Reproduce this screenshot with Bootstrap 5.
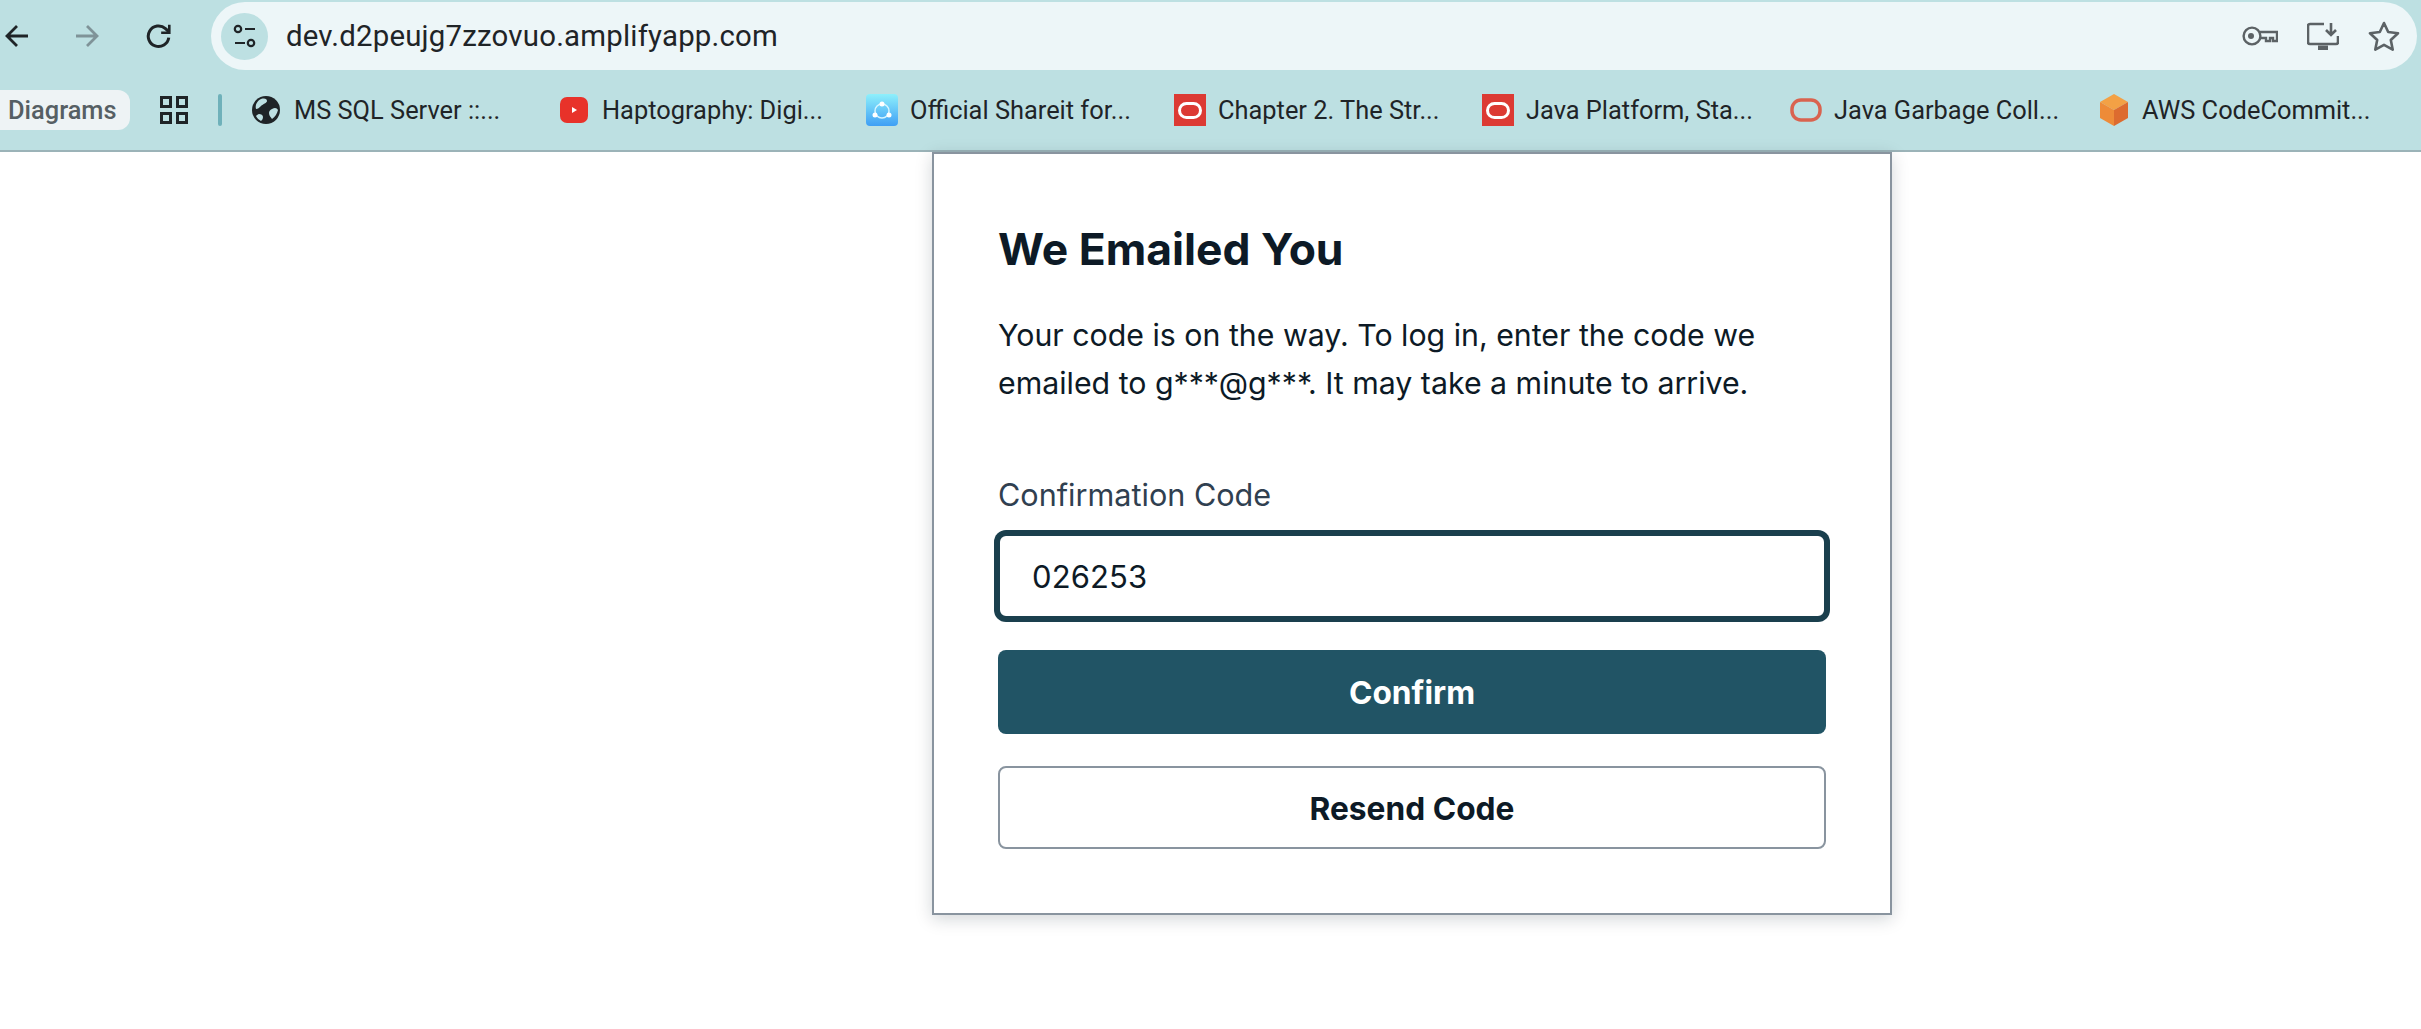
<!DOCTYPE html>
<html lang="en">
<head>
<meta charset="utf-8">
<title>We Emailed You</title>
<link href="https://cdn.jsdelivr.net/npm/bootstrap@5.3.0/dist/css/bootstrap.min.css" rel="stylesheet">
<style>
html{background:#fff;overflow:hidden}
body{background:#fff;min-height:1029px;font-family:Inter,"Liberation Sans",sans-serif;color:#0d1a26}
.chrome-bar{background:#bde0e2;height:152px;border-bottom:2px solid #9bb3b8;font-family:Roboto,"Liberation Sans",sans-serif;color:#1f2427}
.tool-row{height:68px;margin-top:2px}
.nav-slot{width:24px;height:24px;display:block}
.nav-first{margin-left:5px}
.nav-second{margin-left:46px}
.nav-third{margin-left:47px;width:26px;height:26px}
.omni{margin-left:39px;margin-right:4px;background:#edf6f8;border-radius:34px;padding-left:10px;padding-right:17px}
.omni-badge{width:47px;height:47px;background:#bde0e2;border-radius:50%}
.omni-url{font-size:29.4px;margin-left:18px;letter-spacing:.2px}
.omni-tools{gap:29px}
.mark-row{height:80px}
.pill-tab{width:130px;height:40px;background:#eef3f5;border-radius:0 12px 12px 0;font-size:25.4px;font-weight:500;color:#565f64;padding-left:8px}
.grid-ico{margin-left:30px}
.mark-sep{width:4px;height:32px;background:#6fb1ba;border-radius:2px;margin-left:30px;margin-right:28px}
.mark-item{flex:0 0 308px;font-size:25.4px;gap:12px}
.mark-ico{width:32px;height:32px;flex:none;display:block}
.sign-box{width:960px;margin-left:932px;border:2px solid #89949f;background:#fff;box-shadow:0 4px 16px rgba(13,26,38,.18);padding:64px}
.sign-title{font-size:44.4px;font-weight:700;line-height:63px;color:#0d1a26;margin-bottom:30px}
.sign-copy{font-size:30.3px;line-height:48px;color:#0d1a26;margin-bottom:64px}
.code-label{font-size:30.6px;line-height:48px;color:#304050;margin-bottom:15px;display:block}
.code-input{height:84px;border:2px solid #1a3f4d;box-shadow:0 0 0 4px #1a3f4d;border-radius:8px;padding:0 32px;font-size:31px;color:#0d1a26;margin-bottom:32px;letter-spacing:.1px}
.code-input:focus{border-color:#1a3f4d;box-shadow:0 0 0 4px #1a3f4d;color:#0d1a26}
.act-main,.act-main:hover{height:84px;padding-top:8px;background:#215465;border:0;border-radius:8px;color:#fff;font-size:31.7px;font-weight:700;margin-bottom:32px}
.act-alt,.act-alt:hover{height:83px;padding-top:8px;background:#fff;border:2px solid #89949f;border-radius:8px;color:#0d1a26;font-size:31.7px;font-weight:700}
</style>
</head>
<body>
<header class="chrome-bar d-flex flex-column">
  <div class="tool-row d-flex align-items-center">
    <svg class="nav-slot nav-first" viewBox="0 0 24 24" fill="none" stroke="#1f2427" stroke-width="2.8"><path d="M23 12H2M12 2 2 12l10 10"/></svg>
    <svg class="nav-slot nav-second" viewBox="0 0 24 24" fill="none" stroke="#7f9398" stroke-width="2.8"><path d="M1 12h21M12 2l10 10-10 10"/></svg>
    <svg class="nav-slot nav-third" viewBox="0 0 24 24" fill="none" stroke="#1f2427" stroke-width="2.8"><path d="M21 13.500A9.500 9.500 0 1 1 18 5.200L21 8"/><path d="M21.500 1.500V9h-7.500" stroke-width="2.400"/></svg>
    <div class="omni flex-grow-1 h-100 d-flex align-items-center">
      <div class="omni-badge d-flex align-items-center justify-content-center flex-none">
        <svg width="24" height="26" viewBox="0 0 24 26" fill="none" stroke="#1f2427" stroke-width="2.200"><circle cx="5" cy="6" r="3.200"/><path d="M12 6h10M2 20h10"/><circle cx="18" cy="20" r="3.200"/></svg>
      </div>
      <span class="omni-url flex-grow-1">dev.d2peujg7zzovuo.amplifyapp.com</span>
      <div class="omni-tools d-flex align-items-center">
        <svg width="36" height="20" viewBox="0 0 36 20" fill="none" stroke="#5c6265" stroke-width="2.400"><circle cx="10" cy="10" r="8.400"/><circle cx="9" cy="10" r="3" fill="#5c6265" stroke="none"/><path d="M18 6h17v9h-4v-3h-3v3h-4v-3h-6"/></svg>
        <svg width="32" height="28" viewBox="0 0 32 28" fill="none" stroke="#5c6265" stroke-width="2.600"><path d="M17 2H3a2 2 0 0 0-2 2v16a2 2 0 0 0 2 2h26a2 2 0 0 0 2-2v-6"/><path d="M24 1v12M19 8l5 5 5-5"/><path d="M11 26h10" stroke-width="5"/></svg>
        <svg width="32" height="30" viewBox="0 0 32 30" fill="none" stroke="#5c6265" stroke-width="2.600" stroke-linejoin="round"><path d="m16 2 4.200 9 9.800 1.200-7.200 6.800 1.900 9.600L16 23.800l-8.700 4.800 1.900-9.600L2 12.200 11.800 11z"/></svg>
      </div>
    </div>
  </div>
  <div class="mark-row d-flex align-items-center">
    <div class="pill-tab d-flex align-items-center">Diagrams</div>
    <svg class="grid-ico" width="28" height="28" viewBox="0 0 28 28" fill="none" stroke="#1f2427" stroke-width="3"><rect x="1.500" y="1.500" width="9" height="9"/><rect x="17.500" y="1.500" width="9" height="9"/><rect x="1.500" y="17.500" width="9" height="9"/><rect x="17.500" y="17.500" width="9" height="9"/></svg>
    <div class="mark-sep"></div>
    <div class="mark-item d-flex align-items-center">
      <svg class="mark-ico" viewBox="0 0 32 32"><circle cx="16" cy="16" r="14" fill="#1f2427"/><path d="M11 5c4-1 6 0 6 2s-4 3-6 5-3 3-5 3c-1-4 1-8 5-10zM22 15c3-2 5-1 6 1-1 4-3 7-6 9-1-2-3-3-3-6 0-2 1-3 3-4zM9 20c2 0 4 1 4 3s-1 3-2 4c-2-1-4-3-5-5 1-1 2-2 3-2z" fill="#bde0e2"/></svg>
      <span>MS SQL Server ::...</span>
    </div>
    <div class="mark-item d-flex align-items-center">
      <svg class="mark-ico" viewBox="0 0 32 32"><rect x="2" y="3" width="28" height="26" rx="7" fill="#e8322a"/><path d="M14 13v6l5-3z" fill="#fff"/></svg>
      <span>Haptography: Digi...</span>
    </div>
    <div class="mark-item d-flex align-items-center">
      <svg class="mark-ico" viewBox="0 0 32 32"><defs><linearGradient id="sh" x1="0" y1="0" x2="0" y2="1"><stop offset="0" stop-color="#8ef0fb"/><stop offset="1" stop-color="#3f9ff5"/></linearGradient></defs><rect width="32" height="32" rx="4" fill="url(#sh)"/><circle cx="16" cy="17" r="7" fill="none" stroke="#d5f5ff" stroke-width="1.500"/><circle cx="16" cy="10" r="2.500" fill="#fff"/><circle cx="9" cy="21" r="2.500" fill="#fff"/><circle cx="23" cy="21" r="2.500" fill="#fff"/></svg>
      <span>Official Shareit for...</span>
    </div>
    <div class="mark-item d-flex align-items-center">
      <svg class="mark-ico" viewBox="0 0 32 32"><rect width="32" height="32" fill="#dc3a33"/><rect x="5.500" y="9.500" width="21" height="14" rx="7" fill="none" stroke="#fff" stroke-width="3"/></svg>
      <span>Chapter 2. The Str...</span>
    </div>
    <div class="mark-item d-flex align-items-center">
      <svg class="mark-ico" viewBox="0 0 32 32"><rect width="32" height="32" fill="#dc3a33"/><rect x="5.500" y="9.500" width="21" height="14" rx="7" fill="none" stroke="#fff" stroke-width="3"/></svg>
      <span>Java Platform, Sta...</span>
    </div>
    <div class="mark-item d-flex align-items-center">
      <svg class="mark-ico" viewBox="0 0 32 32"><rect x="2" y="6" width="28" height="20" rx="9" fill="none" stroke="#d9634f" stroke-width="3.500"/></svg>
      <span>Java Garbage Coll...</span>
    </div>
    <div class="mark-item d-flex align-items-center">
      <svg class="mark-ico" viewBox="0 0 32 32"><path d="M16 0 30 8 16 16 2 8z" fill="#f3a145"/><path d="M2 8l14 8v16L2 24z" fill="#ee8b38"/><path d="M30 8 16 16v16l14-8z" fill="#dd6b2f"/></svg>
      <span>AWS CodeCommit...</span>
    </div>
  </div>
</header>
<main>
  <form class="sign-box">
    <h3 class="sign-title">We Emailed You</h3>
    <p class="sign-copy">Your code is on the way. To log in, enter the code we emailed to g***@g***. It may take a minute to arrive.</p>
    <label class="code-label" for="code">Confirmation Code</label>
    <input id="code" class="form-control code-input" type="text" value="026253">
    <button type="button" class="btn w-100 d-block act-main">Confirm</button>
    <button type="button" class="btn w-100 d-block act-alt">Resend Code</button>
  </form>
</main>
<script src="https://cdn.jsdelivr.net/npm/bootstrap@5.3.0/dist/js/bootstrap.bundle.min.js"></script>
</body>
</html>
